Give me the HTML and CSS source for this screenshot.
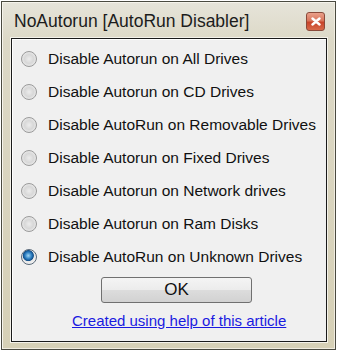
FILE: index.html
```html
<!DOCTYPE html>
<html lang="en">
<head>
    <meta charset="UTF-8">
    <title>NoAutorun [AutoRun Disabler]</title>
    <link rel="stylesheet" href="styles.css">
</head>
<body>
    <div class="window">
        <div class="titlebar">
            <span class="title">NoAutorun [AutoRun Disabler]</span>
            <span class="close-btn">
                <svg width="10" height="9" viewBox="0 0 10 9">
                    <path d="M1.5 1.5 L8.5 7.5 M8.5 1.5 L1.5 7.5" stroke="#fff" stroke-width="2.4" stroke-linecap="round"/>
                </svg>
            </span>
        </div>
        <div class="panel">
            <label class="option"><span class="radio"></span>Disable Autorun on All Drives</label>
            <label class="option"><span class="radio"></span>Disable Autorun on CD Drives</label>
            <label class="option"><span class="radio"></span>Disable AutoRun on Removable Drives</label>
            <label class="option"><span class="radio"></span>Disable Autorun on Fixed Drives</label>
            <label class="option"><span class="radio"></span>Disable Autorun on Network drives</label>
            <label class="option"><span class="radio"></span>Disable Autorun on Ram Disks</label>
            <label class="option"><span class="radio checked"></span>Disable AutoRun on Unknown Drives</label>
            <button class="ok-btn">OK</button>
            <a class="article-link" href="#">Created using help of this article</a>
        </div>
    </div>
</body>
</html>
```

FILE: styles.css
```css
body {
    margin: 0;
    padding: 0;
    background-color: #ffffff;
    font-family: "Liberation Sans", Arial, sans-serif;
}
.window {
    box-sizing: border-box;
    width: 335px;
    height: 349px;
    margin: 1px 0 0 1px;
    border: 1px solid #4a4a40;
    background: linear-gradient(to bottom, #e6e4da 0px, #dcd8c6 40px, #d6d0b6 100%);
    box-shadow: inset 1px 1px 0 #f6f4ec, inset -1px -1px 0 #f0ece0;
    display: flex;
    flex-direction: column;
}
.titlebar {
    height: 36px;
    display: flex;
    align-items: center;
    justify-content: space-between;
    padding: 0 10px 0 12px;
}
.title {
    font-size: 17.5px;
    color: #1c1c1c;
    margin-top: 2px;
}
.close-btn {
    box-sizing: border-box;
    width: 19px;
    height: 19px;
    margin-top: 2px;
    border: 1px solid #8a4a3a;
    border-radius: 3px;
    background: linear-gradient(to bottom, #eaa08a 0%, #d8765c 45%, #c8442a 55%, #d86a4a 100%);
    display: flex;
    align-items: center;
    justify-content: center;
}
.panel {
    box-sizing: border-box;
    margin: 0 8px 0 9px;
    height: 304px;
    border: 1px solid #1a1a1a;
    box-shadow: inset 1px 1px 0 #ffffff, 0 0 0 1px #f4f2ea;
    background-color: #f0f0f0;
    display: flex;
    flex-direction: column;
    padding: 3px 0 0 9px;
}
.option {
    display: flex;
    align-items: center;
    height: 33px;
    font-size: 15.5px;
    color: #111;
}
.radio {
    box-sizing: border-box;
    width: 16px;
    height: 16px;
    border-radius: 50%;
    border: 1px solid #9a9a9a;
    background: radial-gradient(circle at 50% 50%, #ececec 0, #d8d8d8 45%, #f8f8f8 100%);
    margin-right: 11px;
}
.radio.checked {
    background: radial-gradient(circle at 45% 40%, #9fd6f4 0, #2a7cc0 30%, #12508a 45%, #e8e8e8 52%, #fafafa 100%);
    border-color: #5a6a7a;
}
.ok-btn {
    box-sizing: border-box;
    width: 151px;
    height: 26px;
    margin: 4px 0 0 80px;
    border: 1px solid #707070;
    border-radius: 3px;
    background: linear-gradient(to bottom, #f4f4f4 0%, #ececec 48%, #dcdcdc 52%, #d2d2d2 100%);
    font-family: "Liberation Sans", Arial, sans-serif;
    font-size: 17px;
    color: #111;
    padding: 0;
}
.article-link {
    margin: 9px 0 0 51px;
    font-size: 15px;
    color: #1a1ae0;
    text-decoration: underline;
}
```
